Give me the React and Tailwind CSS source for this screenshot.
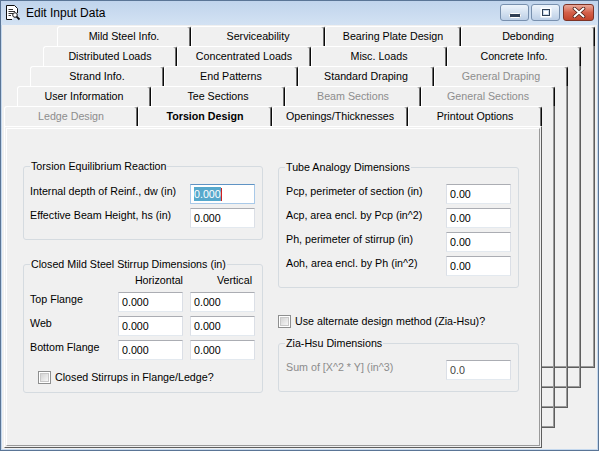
import React from "react";

const page = "bg-[#f0f0f0]";
const widths = ["w-[134px]", "w-[134px]", "w-[136px]", "w-[134px]"];

const tabRows = [
  {
    ml: "ml-[55px]",
    tabs: [{ label: "Mild Steel Info." }, { label: "Serviceability" }, { label: "Bearing Plate Design" }, { label: "Debonding" }],
  },
  {
    ml: "ml-[41px]",
    tabs: [{ label: "Distributed Loads" }, { label: "Concentrated Loads" }, { label: "Misc. Loads" }, { label: "Concrete Info." }],
  },
  {
    ml: "ml-[28px]",
    tabs: [{ label: "Strand Info." }, { label: "End Patterns" }, { label: "Standard Draping" }, { label: "General Draping", off: true }],
  },
  {
    ml: "ml-[15px]",
    tabs: [{ label: "User Information" }, { label: "Tee Sections" }, { label: "Beam Sections", off: true }, { label: "General Sections", off: true }],
  },
  {
    ml: "ml-[2px]",
    tabs: [{ label: "Ledge Design", off: true }, { label: "Torsion Design", active: true }, { label: "Openings/Thicknesses" }, { label: "Printout Options" }],
  },
];

// outlines of the pages that sit behind the front one
const backPages = ["left-[55px] top-[21px]", "left-[41px] top-[41px]", "left-[28px] top-[61px]", "left-[15px] top-[81px]"];

const Tab = ({ label, off, active, w }) => (
  <div
    className={`${w} h-[20px] flex items-center justify-center rounded-t-[3px] border-l border-t border-white border-r border-r-[#0a0a0a] shadow-[inset_-1px_0_0_#6e6e6e] ${page} ${
      off ? "text-[#8d8d8d]" : "text-black"
    } ${active ? "font-bold" : ""}`}
  >
    {label}
  </div>
);

const Field = ({ value, focused, dim }) => (
  <div
    className={`w-[65px] h-[20px] shrink-0 bg-white border flex items-center pl-[3px] ${
      focused ? "border-[#a9c9e8] border-t-[#5f93c4]" : "border-[#dbdfe6] border-t-[#abadb3] border-b-[#e3e9ef]"
    } ${dim ? "text-[#444]" : "text-black"}`}
  >
    {focused ? (
      <>
        <span className="bg-[#56a8cc] text-white leading-[14px]">{value}</span>
        <span className="w-px h-[13px] bg-[#d02020]" />
      </>
    ) : (
      value
    )}
  </div>
);

const Group = ({ title, className, children }) => (
  <div className={`relative border border-[#d5dbe0] rounded-[3px] ${className}`}>
    <span className={`absolute left-[6px] -top-[8px] px-[1px] leading-[14px] ${page}`}>{title}</span>
    {children}
  </div>
);

const Row = ({ label, value, focused, w = "w-[160px]", gray }) => (
  <div className="flex items-start">
    <span className={`${w} leading-[14px] ${gray ? "text-[#8c8c8c]" : ""}`}>{label}</span>
    <Field value={value} focused={focused} dim={gray} />
  </div>
);

const Check = ({ label }) => (
  <div className="flex items-center h-[14px] gap-[4px]">
    <span className="w-[13px] h-[13px] border border-[#8e8f8f] bg-white p-[1px]">
      <span className="block w-full h-full bg-gradient-to-br from-[#d4d4d4] to-[#f6f6f6] border border-[#c8c8c8]" />
    </span>
    <span className="leading-[14px]">{label}</span>
  </div>
);

const DocIcon = () => (
  <svg width="17" height="17" viewBox="0 0 17 17">
    <path d="M2.5 1.5H10.5L13.5 4.5V9M2.5 1.5V15.5H8" fill="#fff" stroke="#111" />
    <path d="M3 2H10V5H13V9L9 15H3Z" fill="#fff" />
    <path d="M4.5 5.5H9M4.5 7.5H11M4.5 9.5H9M4.5 11.5H7" stroke="#333" />
    <circle cx="11" cy="11" r="2.3" fill="#fff" stroke="#111" />
    <path d="M12.6 12.6L15.5 15.5" stroke="#111" strokeWidth="1.8" />
  </svg>
);

const WinButton = ({ kind }) => {
  if (kind === "close")
    return (
      <div className="w-[31px] h-[17px] rounded-[3px] border border-[#7d3326] bg-gradient-to-b from-[#e9a899] via-[#d4604a] to-[#c2432b] flex items-center justify-center">
        <svg width="14" height="11" viewBox="0 0 14 11">
          <path d="M2.5 1.5L11.5 9.5M11.5 1.5L2.5 9.5" stroke="#4a1d16" strokeWidth="3.6" strokeLinecap="round" />
          <path d="M2.5 1.5L11.5 9.5M11.5 1.5L2.5 9.5" stroke="#fff" strokeWidth="2" strokeLinecap="round" />
        </svg>
      </div>
    );
  return (
    <div className="w-[29px] h-[17px] rounded-[3px] border border-[#7890ae] bg-gradient-to-b from-[#eef4fb] via-[#d5e2f1] to-[#bccfe6] flex items-center justify-center">
      {kind === "min" ? (
        <svg width="12" height="12" viewBox="0 0 12 12">
          <rect x="0.5" y="6.5" width="11" height="4" rx="1" fill="#2f3f55" stroke="#fff" />
        </svg>
      ) : (
        <svg width="12" height="11" viewBox="0 0 12 11">
          <rect x="1.5" y="1.5" width="9" height="8" fill="none" stroke="#fff" strokeWidth="2" />
          <rect x="2.5" y="2.5" width="7" height="6" fill="#c9d8ea" stroke="#2f3f55" />
          <rect x="4" y="4" width="4" height="3" fill="#fff" />
        </svg>
      )}
    </div>
  );
};

export default function App() {
  return (
    <div className="w-[599px] h-[451px] border border-[#5a7596] bg-[#c4d8ee] flex flex-col font-['Liberation_Sans',Arial,sans-serif] text-[10.7px] text-black overflow-hidden">
      {/* title bar */}
      <div className="h-[24px] shrink-0 flex items-start pl-[3px] pr-[4px] bg-gradient-to-b from-[#c0d4ec] to-[#d3e2f3]">
        <div className="mt-[3px]">
          <DocIcon />
        </div>
        <span className="ml-[5px] mt-[4px] text-[12px] leading-[16px]">Edit Input Data</span>
        <div className="ml-auto mt-[3px] flex">
          <WinButton kind="min" />
          <div className="ml-[2px]">
            <WinButton kind="max" />
          </div>
          <div className="ml-[3px]">
            <WinButton kind="close" />
          </div>
        </div>
      </div>

      {/* client area */}
      <div className={`relative flex-1 mx-[1px] mb-[1px] pt-[1px] ${page}`}>
        {backPages.map((pos) => (
          <div
            key={pos}
            className={`absolute ${pos} w-[538px] h-[322px] border-r border-b border-[#5e5e5e] shadow-[inset_-1px_-1px_0_#9a9a9a]`}
          />
        ))}

        {tabRows.map((row, i) => (
          <div key={i} className={`relative flex h-[20px] ${row.ml}`}>
            {row.tabs.map((t, j) => (
              <Tab key={t.label} {...t} w={widths[j]} />
            ))}
          </div>
        ))}

        {/* front page */}
        <div className={`relative ml-[2px] w-[538px] h-[322px] border border-white border-r-[#5e5e5e] border-b-[#5e5e5e] ${page}`}>
          <div className="m-[1px] h-[318px] border border-white border-r-[#9a9a9a] border-b-[#9a9a9a] pl-[16px] pt-[37px] flex gap-[15px]">
            {/* left column */}
            <div className="w-[240px] flex flex-col">
              <Group title="Torsion Equilibrium Reaction" className="pt-[17px] pb-[11px] pl-[6px] flex flex-col gap-[4px]">
                <Row label="Internal depth of Reinf., dw (in)" value="0.000" focused />
                <Row label="Effective Beam Height, hs (in)" value="0.000" />
              </Group>

              <Group title="Closed Mild Steel Stirrup Dimensions (in)" className="mt-[24px] pt-[8px] pb-[8px] pl-[6px]">
                <div className="flex h-[14px] leading-[14px]">
                  <span className="w-[88px]" />
                  <span className="w-[65px] text-right">Horizontal</span>
                  <span className="ml-[7px] w-[65px] text-right pr-[3px]">Vertical</span>
                </div>
                <div className="mt-[5px] flex flex-col gap-[4px]">
                  {["Top Flange", "Web", "Bottom Flange"].map((l) => (
                    <div key={l} className="flex items-start">
                      <span className="w-[88px] leading-[14px]">{l}</span>
                      <Field value="0.000" />
                      <div className="ml-[7px]">
                        <Field value="0.000" />
                      </div>
                    </div>
                  ))}
                </div>
                <div className="mt-[10px] pl-[8px]">
                  <Check label="Closed Stirrups in Flange/Ledge?" />
                </div>
              </Group>
            </div>

            {/* right column */}
            <div className="w-[241px] pt-[1px] flex flex-col">
              <Group title="Tube Analogy Dimensions" className="pt-[16px] pb-[11px] pl-[7px] flex flex-col gap-[4px]">
                <Row label="Pcp, perimeter of section (in)" value="0.00" />
                <Row label="Acp, area encl. by Pcp (in^2)" value="0.00" />
                <Row label="Ph, perimeter of stirrup (in)" value="0.00" />
                <Row label="Aoh, area encl. by Ph (in^2)" value="0.00" />
              </Group>

              <div className="mt-[26px]">
                <Check label="Use alternate design method (Zia-Hsu)?" />
              </div>

              <Group title="Zia-Hsu Dimensions" className="mt-[15px] pt-[16px] pb-[11px] pl-[7px]">
                <Row label="Sum of [X^2 * Y] (in^3)" value="0.0" gray />
              </Group>
            </div>
          </div>
        </div>
      </div>
    </div>
  );
}
